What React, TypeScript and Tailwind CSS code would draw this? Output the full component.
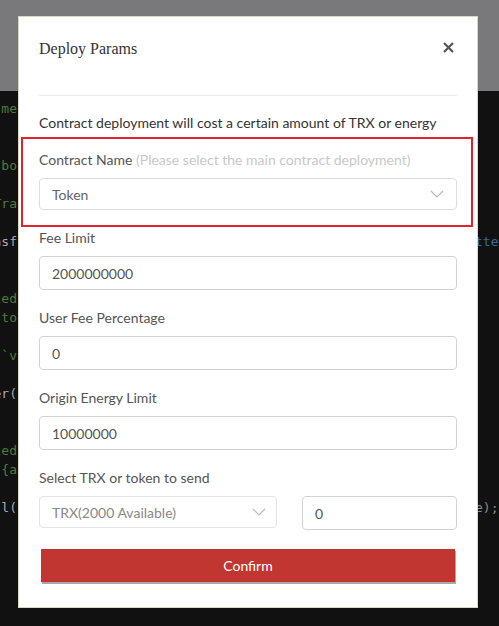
import React from "react";

const codeLines: { l?: string; lc?: string; r?: string; rc?: string }[] = [
  { l: "me", lc: "text-[#4c7a3c]" },
  {},
  {},
  { l: "bo", lc: "text-[#4c7a3c]" },
  {},
  { l: "Tra", lc: "text-[#4c7a3c]" },
  {},
  { l: "nsf", lc: "text-[#a8a8b0]", r: "tter", rc: "text-[#3b6a9c]" },
  {},
  {},
  { l: "ted", lc: "text-[#4c7a3c]" },
  { l: " to", lc: "text-[#4c7a3c]" },
  {},
  { l: "`v", lc: "text-[#4c7a3c]" },
  {},
  { l: "er(", lc: "text-[#a8a8b0]" },
  {},
  {},
  { l: "ted", lc: "text-[#4c7a3c]" },
  { l: "{a", lc: "text-[#4c7a3c]" },
  {},
  { l: "l(", lc: "text-[#a8a8b0]", r: "e);", rc: "text-[#8a8a92]" },
];

function Chevron() {
  return (
    <svg width="14" height="8" viewBox="0 0 14 8" fill="none">
      <polyline points="1,1 7,7 13,1" stroke="#b8b8b8" strokeWidth="1.1" />
    </svg>
  );
}

function Field({ label, value }: { label: string; value: string }) {
  return (
    <div className="mt-[18px]">
      <div className="text-[14px] leading-[20px] text-[#555] mb-[8px]">{label}</div>
      <div className="h-[34px] rounded-[4px] border border-[#d2d2d8] flex items-center px-[12px] text-[14px] text-[#555]">
        {value}
      </div>
    </div>
  );
}

export default function App() {
  return (
    <div className="relative w-[499px] h-[626px] overflow-hidden bg-[#111111] font-['Lato','Liberation_Sans',sans-serif]">
      {/* editor behind the overlay */}
      <div className="h-[91px] bg-[#79797b]" />
      <div className="absolute left-0 top-[99px] w-full font-['DejaVu_Sans_Mono',monospace] text-[13px]">
        {codeLines.map((c, i) => (
          <div key={i} className="h-[19px] leading-[19px] flex justify-between">
            <div className={`w-[18px] overflow-hidden whitespace-pre flex justify-end pr-[1px] ${c.lc ?? ""}`}>
              {c.l ?? ""}
            </div>
            <div className={`w-[21px] overflow-hidden whitespace-pre -indent-[3px] ${c.rc ?? ""}`}>
              {c.r ?? ""}
            </div>
          </div>
        ))}
      </div>

      {/* modal */}
      <div className="absolute left-[18px] top-[16px] w-[460px] h-[592px] bg-white border border-[#ddd6c4] px-[20px]">
        <div className="h-[64px] flex items-center justify-between">
          <h2 className="font-['Liberation_Serif',serif] text-[16px] text-[#333]">Deploy Params</h2>
          <svg width="11" height="11" viewBox="0 0 11 11" className="mr-[3px] -mt-[4px]">
            <path d="M1 1 L10 10 M10 1 L1 10" stroke="#555" strokeWidth="2.2" />
          </svg>
        </div>
        <div className="mt-[14px] h-px bg-[#e9e9e9]" />

        <p className="mt-[17px] text-[14px] leading-[20px] text-[#333]">
          Contract deployment will cost a certain amount of TRX or energy
        </p>

        <div className="mt-[17px]">
          <div className="text-[14px] leading-[20px] text-[#555] mb-[8px]">
            Contract Name <span className="text-[#c8c8c8]">(Please select the main contract deployment)</span>
          </div>
          <div className="h-[32px] rounded-[4px] border border-[#dcdcdc] flex items-center justify-between pl-[12px] pr-[12px] text-[14px] text-[#666]">
            <span>Token</span>
            <Chevron />
          </div>
        </div>

        <Field label="Fee Limit" value="2000000000" />
        <Field label="User Fee Percentage" value="0" />
        <Field label="Origin Energy Limit" value="10000000" />

        <div className="mt-[18px]">
          <div className="text-[14px] leading-[20px] text-[#555] mb-[8px]">Select TRX or token to send</div>
          <div className="flex items-start gap-[25px]">
            <div className="w-[238px] h-[32px] rounded-[4px] border border-[#e3e3e8] flex items-center justify-between pl-[12px] pr-[10px] text-[14px] text-[#888]">
              <span>TRX(2000 Available)</span>
              <Chevron />
            </div>
            <div className="flex-1 h-[34px] rounded-[4px] border border-[#d2d2d8] flex items-center px-[12px] text-[14px] text-[#555]">
              0
            </div>
          </div>
        </div>

        <button className="mt-[19px] ml-[2px] w-[414px] h-[33px] bg-[#c23631] text-white text-[14px] shadow-[1px_2px_0_#a9a9a9] flex items-center justify-center">
          Confirm
        </button>

        {/* annotation frame */}
        <div className="absolute left-[2px] top-[120px] w-[452px] h-[90px] border-2 border-[#e3232b] pointer-events-none" />
      </div>
    </div>
  );
}
